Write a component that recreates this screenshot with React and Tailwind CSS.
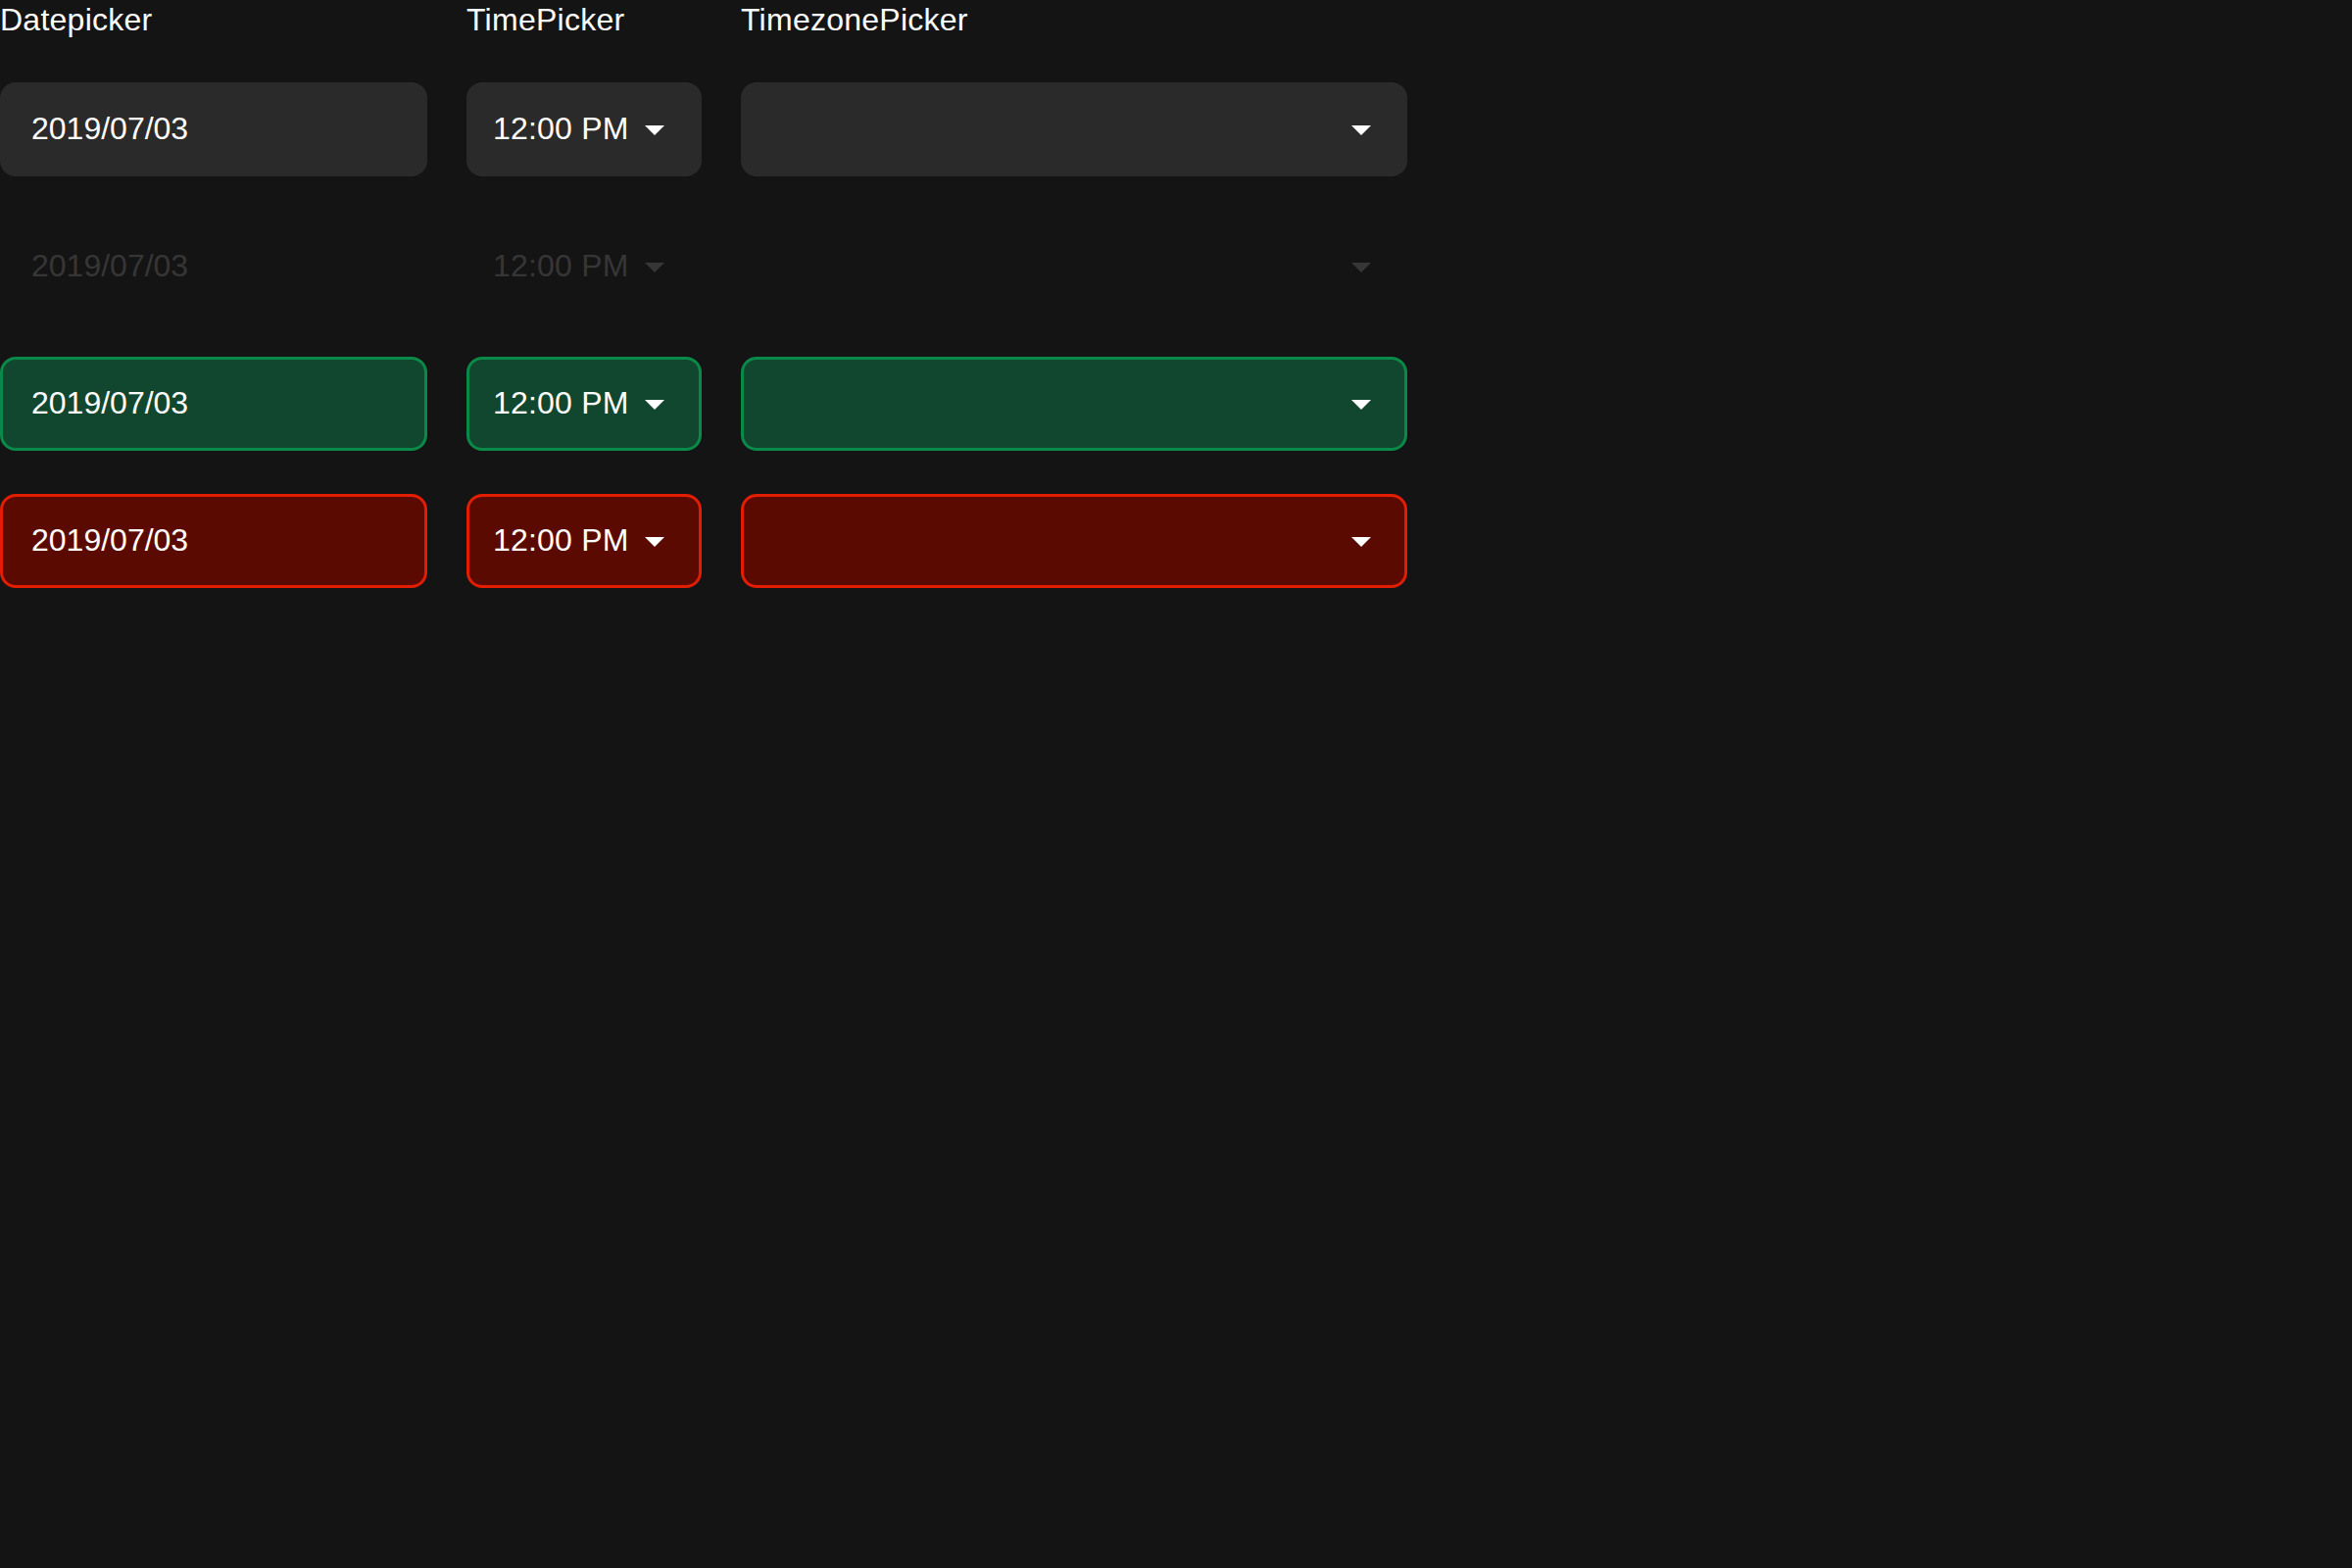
import React from "react";

const font = { fontFamily: '"Liberation Sans", Arial, sans-serif' };

function Arrow({ dim }) {
  return (
    <svg width="48" height="48" viewBox="0 0 24 24" className="shrink-0">
      <path d="M7 10l5 5 5-5z" fill={dim ? "#363636" : "#ffffff"} />
    </svg>
  );
}

const variants = {
  default: "bg-[#2a2a2a] border-transparent text-white",
  disabled: "bg-transparent border-transparent text-[#363636]",
  success: "bg-[#12472f] border-[#0a8a48] text-white",
  error: "bg-[#5a0a00] border-[#e21d02] text-white",
};

const states = ["default", "disabled", "success", "error"];

function DateBox({ v }) {
  return (
    <div className={`flex h-[96px] w-[436px] items-center rounded-[16px] border-[3px] pb-[3px] pl-[29px] text-[32px] ${variants[v]}`}>
      2019/07/03
    </div>
  );
}

function TimeBox({ v }) {
  return (
    <div className={`flex h-[96px] w-[240px] items-center justify-between rounded-[16px] border-[3px] pl-[24px] pr-[21px] text-[32px] tracking-[0.2px] ${variants[v]}`}>
      <span className="pb-[3px]">12:00 PM</span>
      <Arrow dim={v === "disabled"} />
    </div>
  );
}

function ZoneBox({ v }) {
  return (
    <div className={`flex h-[96px] w-[680px] items-center justify-end rounded-[16px] border-[3px] pr-[20px] text-[32px] ${variants[v]}`}>
      <Arrow dim={v === "disabled"} />
    </div>
  );
}

function Column({ label, children }) {
  return (
    <div className="flex flex-col gap-[44px]">
      <div className="h-[40px] text-[32px] leading-[40px] tracking-[0.25px] text-white">{label}</div>
      {children}
    </div>
  );
}

export default function App() {
  return (
    <div className="min-h-[1600px] w-full bg-[#141414]" style={font}>
      <div className="flex gap-[40px]">
        <Column label="Datepicker">
          {states.map((s) => (
            <DateBox key={s} v={s} />
          ))}
        </Column>
        <Column label="TimePicker">
          {states.map((s) => (
            <TimeBox key={s} v={s} />
          ))}
        </Column>
        <Column label="TimezonePicker">
          {states.map((s) => (
            <ZoneBox key={s} v={s} />
          ))}
        </Column>
      </div>
    </div>
  );
}
